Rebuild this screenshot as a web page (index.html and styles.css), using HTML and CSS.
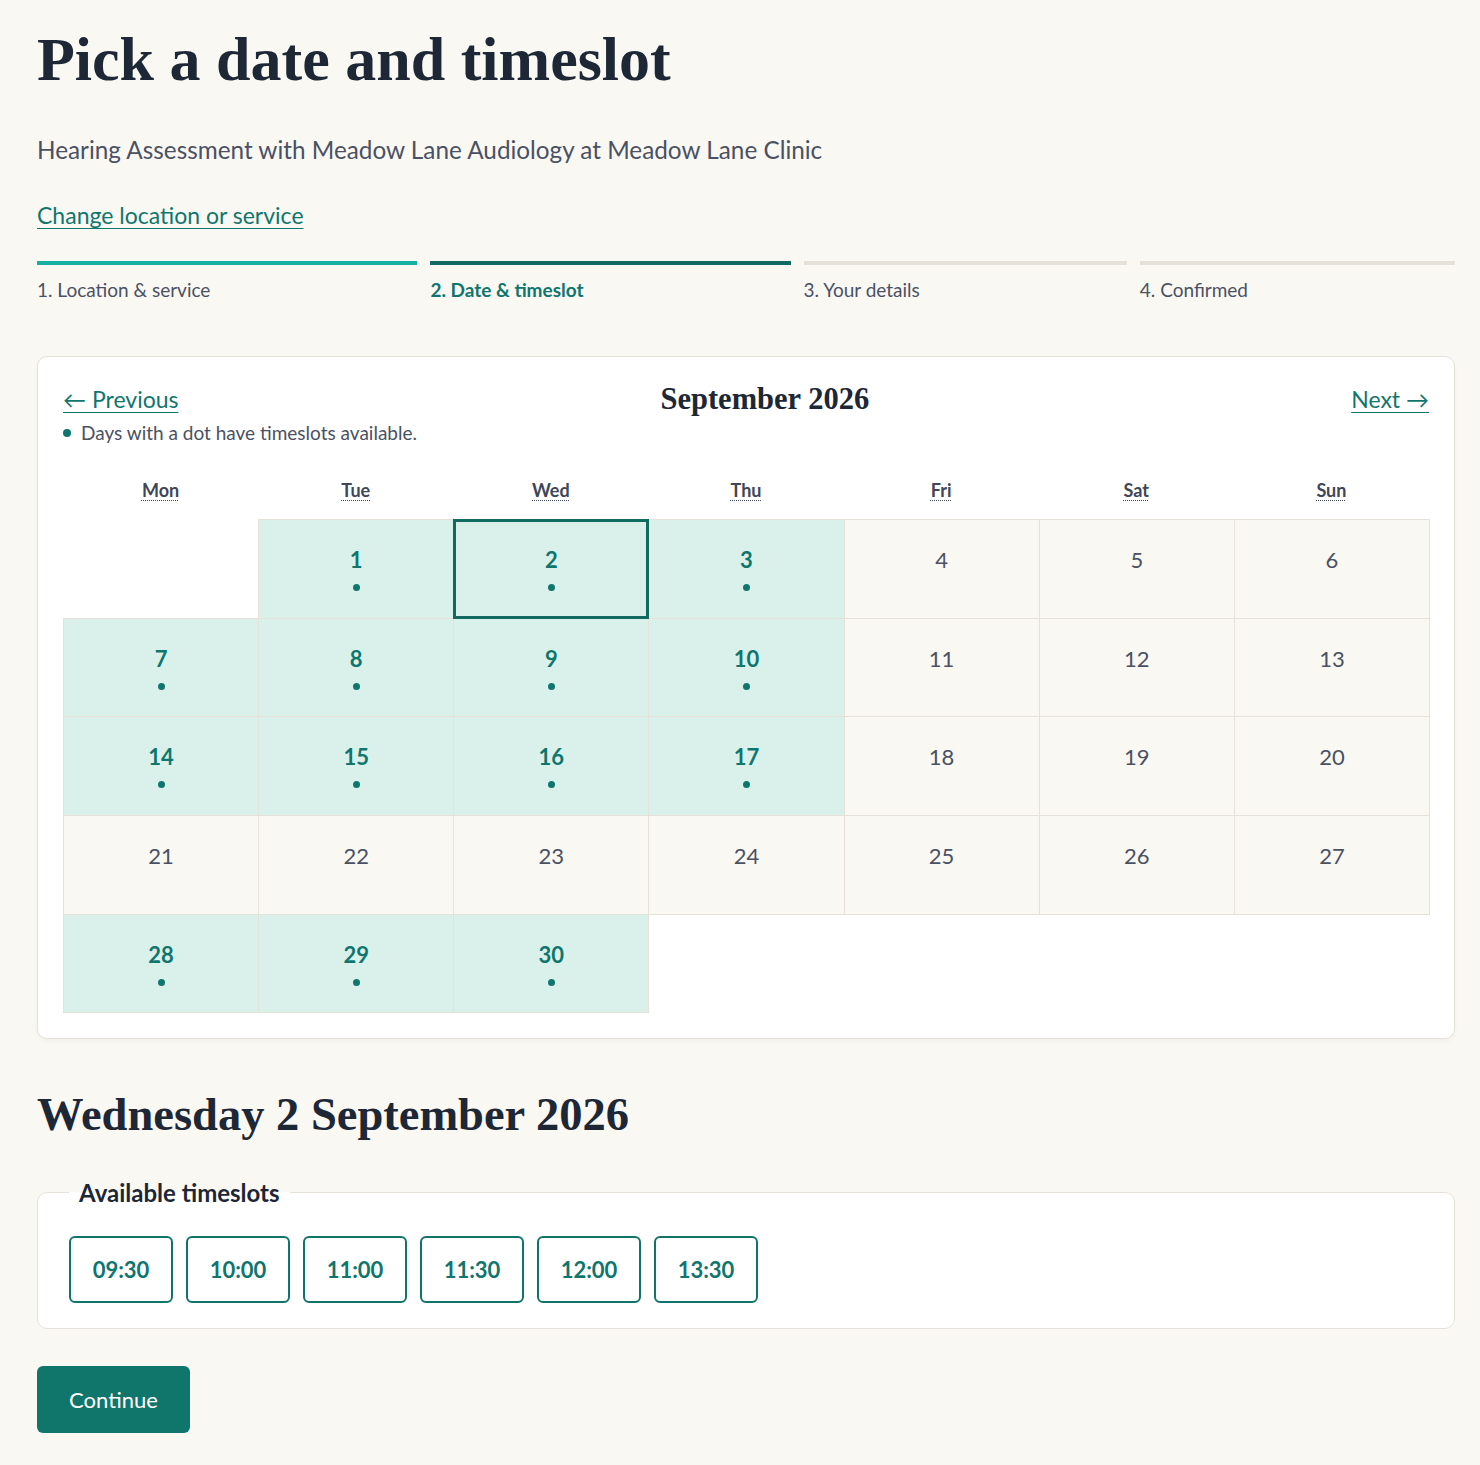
FILE: index.html
```html
<!DOCTYPE html>
<html lang="en">
<head>
    <meta charset="UTF-8">
    <meta name="viewport" content="width=device-width, initial-scale=1.0">
    <title>Pick a date and timeslot</title>
    <link rel="stylesheet" href="styles.css">
</head>
<body>
    <main class="page">
        <h1 class="title">Pick a date and timeslot</h1>
        <p class="lead">Hearing Assessment with Meadow Lane Audiology at Meadow Lane Clinic</p>
        <a class="link change-link" href="#">Change location or service</a>

        <ol class="steps">
            <li class="step done">1. Location &amp; service</li>
            <li class="step current">2. Date &amp; timeslot</li>
            <li class="step">3. Your details</li>
            <li class="step">4. Confirmed</li>
        </ol>

        <section class="calendar">
            <div class="cal-head">
                <a class="link" href="#">&larr; Previous</a>
                <h2 class="month">September 2026</h2>
                <a class="link" href="#">Next &rarr;</a>
            </div>
            <p class="legend"><span class="dot"></span>Days with a dot have timeslots available.</p>

            <div class="weekdays">
                <abbr title="Monday">Mon</abbr>
                <abbr title="Tuesday">Tue</abbr>
                <abbr title="Wednesday">Wed</abbr>
                <abbr title="Thursday">Thu</abbr>
                <abbr title="Friday">Fri</abbr>
                <abbr title="Saturday">Sat</abbr>
                <abbr title="Sunday">Sun</abbr>
            </div>

            <div class="days">
                <div class="day empty"></div>
                <div class="day open"><span>1</span><i class="dot"></i></div>
                <div class="day open selected"><span>2</span><i class="dot"></i></div>
                <div class="day open"><span>3</span><i class="dot"></i></div>
                <div class="day"><span>4</span></div>
                <div class="day"><span>5</span></div>
                <div class="day"><span>6</span></div>

                <div class="day open"><span>7</span><i class="dot"></i></div>
                <div class="day open"><span>8</span><i class="dot"></i></div>
                <div class="day open"><span>9</span><i class="dot"></i></div>
                <div class="day open"><span>10</span><i class="dot"></i></div>
                <div class="day"><span>11</span></div>
                <div class="day"><span>12</span></div>
                <div class="day"><span>13</span></div>

                <div class="day open"><span>14</span><i class="dot"></i></div>
                <div class="day open"><span>15</span><i class="dot"></i></div>
                <div class="day open"><span>16</span><i class="dot"></i></div>
                <div class="day open"><span>17</span><i class="dot"></i></div>
                <div class="day"><span>18</span></div>
                <div class="day"><span>19</span></div>
                <div class="day"><span>20</span></div>

                <div class="day"><span>21</span></div>
                <div class="day"><span>22</span></div>
                <div class="day"><span>23</span></div>
                <div class="day"><span>24</span></div>
                <div class="day"><span>25</span></div>
                <div class="day"><span>26</span></div>
                <div class="day"><span>27</span></div>

                <div class="day open"><span>28</span><i class="dot"></i></div>
                <div class="day open"><span>29</span><i class="dot"></i></div>
                <div class="day open"><span>30</span><i class="dot"></i></div>
            </div>
        </section>

        <h2 class="day-title">Wednesday 2 September 2026</h2>

        <fieldset class="slots">
            <legend>Available timeslots</legend>
            <div class="slot-list">
                <button class="slot">09:30</button>
                <button class="slot">10:00</button>
                <button class="slot">11:00</button>
                <button class="slot">11:30</button>
                <button class="slot">12:00</button>
                <button class="slot">13:30</button>
            </div>
        </fieldset>

        <button class="continue">Continue</button>
    </main>
</body>
</html>
```

FILE: styles.css
```css
body {
    margin: 0;
    background-color: #faf8f3;
    color: #1d2736;
    font-family: Lato, "Liberation Sans", sans-serif;
}
.page {
    width: 1418px;
    margin-left: 37px;
    padding: 25px 0 33px;
}
.title {
    font-family: "Liberation Serif", serif;
    font-size: 62px;
    line-height: 1.1;
    font-weight: bold;
    margin: 0;
    color: #1d2736;
}
.lead {
    font-size: 24.3px;
    color: #4a5163;
    margin: 41px 0 0;
    line-height: 32px;
}
.link {
    color: #0f766e;
    text-decoration: underline;
    text-underline-offset: 4px;
    text-decoration-thickness: 1px;
}
.change-link {
    display: inline-block;
    margin-top: 34px;
    font-size: 23px;
    line-height: 30px;
}
.steps {
    list-style: none;
    margin: 31px 0 0;
    padding: 0;
    display: flex;
    gap: 13px;
}
.step {
    flex: 1 1 auto;
    border-top: 4px solid #e6e1d8;
    padding-top: 12px;
    font-size: 19px;
    line-height: 26px;
    color: #4a5163;
    white-space: nowrap;
}
.step.done {
    border-top-color: #14b1a0;
}
.step.current {
    border-top-color: #11695f;
    color: #0f766e;
    font-weight: bold;
}

.calendar {
    margin-top: 53px;
    background: white;
    border: 1px solid #e6e2da;
    border-radius: 10px;
    box-shadow: 0 2px 4px rgba(0, 0, 0, 0.04);
    padding: 26px 25px 26px;
}
.cal-head {
    display: flex;
    justify-content: space-between;
    align-items: center;
    font-size: 23px;
    line-height: 32px;
}
.month {
    font-family: "Liberation Serif", serif;
    font-size: 30.5px;
    font-weight: bold;
    margin: 0;
    color: #1d2736;
}
.legend {
    margin: 5px 0 0;
    font-size: 19px;
    line-height: 26px;
    color: #4a5163;
    display: flex;
    align-items: center;
}
.legend .dot {
    margin-right: 10px;
}
.dot {
    display: block;
    width: 8px;
    height: 8px;
    border-radius: 50%;
    background: #0f766e;
}
.weekdays {
    display: grid;
    grid-template-columns: repeat(7, 1fr);
    margin-top: 32px;
    padding-bottom: 17px;
    text-align: center;
    font-size: 18px;
    line-height: 24px;
    font-weight: bold;
    color: #3f4657;
}
.weekdays abbr {
    text-decoration: underline dotted;
    text-underline-offset: 3px;
    text-decoration-thickness: 1px;
}
.days {
    display: grid;
    grid-template-columns: repeat(7, 1fr);
    grid-auto-rows: 98.6px;
}
.day {
    margin: 0 -1px -1px 0;
    border: 1px solid #e6e2da;
    background: #faf8f3;
    display: flex;
    flex-direction: column;
    align-items: center;
    padding-top: 27px;
    font-size: 22px;
    line-height: 26px;
    color: #4a5163;
}
.day.empty {
    background: white;
    border-color: transparent;
}
.day.open {
    background: #d9f1ea;
    color: #0f766e;
    font-weight: bold;
}
.day .dot {
    width: 7px;
    height: 7px;
    margin-top: 11px;
}
.day.selected {
    position: relative;
    z-index: 1;
    border: 3px solid #11695f;
    padding-top: 25px;
}

.day-title {
    font-family: "Liberation Serif", serif;
    font-size: 46.5px;
    line-height: 1.2;
    font-weight: bold;
    margin: 48px 0 0;
    color: #1d2736;
}
.slots {
    margin: 35px 0 0;
    background: white;
    border: 1px solid #e6e2da;
    border-radius: 10px;
    padding: 28px 31px 25px;
}
.slots legend {
    padding: 0 10px;
    font-size: 24px;
    line-height: 30px;
    font-weight: bold;
    color: #1d2736;
}
.slot-list {
    display: flex;
    gap: 13px;
}
.slot {
    width: 104px;
    height: 67px;
    background: white;
    border: 2px solid #11746b;
    border-radius: 6px;
    color: #0f766e;
    font-family: inherit;
    font-size: 22px;
    font-weight: bold;
    cursor: pointer;
}
.continue {
    display: block;
    margin-top: 37px;
    width: 153px;
    height: 67px;
    background: #10756b;
    color: white;
    border: none;
    border-radius: 6px;
    font-family: inherit;
    font-size: 22px;
    cursor: pointer;
}
```
